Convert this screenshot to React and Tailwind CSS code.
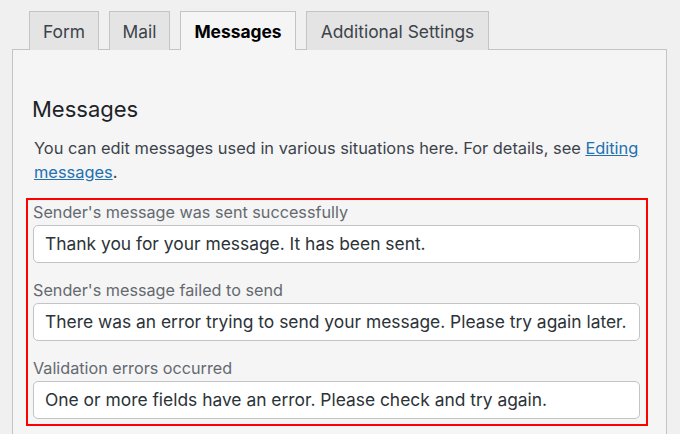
const tabs = [
    { name: "Form", width: "w-[70px]", active: false },
    { name: "Mail", width: "w-[61px]", active: false },
    { name: "Messages", width: "w-[116px]", active: true },
    { name: "Additional Settings", width: "w-[183px]", active: false },
];

const messages = [
    { label: "Sender's message was sent successfully", value: "Thank you for your message. It has been sent." },
    { label: "Sender's message failed to send", value: "There was an error trying to send your message. Please try again later." },
    { label: "Validation errors occurred", value: "One or more fields have an error. Please check and try again." },
];

const App = () => {
    return (
        <div className="w-[680px] h-[434px] overflow-hidden bg-[#f0f0f1] text-[#1d2327]" style={{ fontFamily: "Inter, 'Noto Sans', sans-serif" }}>
            {/* Tabs */}
            <div className="flex items-end gap-[10px] pl-[29px] h-[50px]">
                {tabs.map(tab => (
                    <div
                        key={tab.name}
                        className={`${tab.width} h-[39px] pt-[3px] flex items-center justify-center whitespace-nowrap border border-[#c3c4c7] text-[17.4px] ${tab.active ? 'bg-[#f5f5f5] border-b-0 relative z-10 font-bold text-black' : 'bg-[#e4e4e4] border-b-0 text-[#3c434a]'}`}
                    >
                        {tab.name}
                    </div>
                ))}
            </div>

            {/* Panel */}
            <div className="-mt-px ml-[12px] w-[655px] h-[400px] bg-[#f5f5f5] border border-[#c3c4c7] pt-[44px] pl-[19px] pr-[18px]">
                <h2 className="text-[22px] leading-[30px] text-[#1d2327]">Messages</h2>
                <div className="mt-[12px] ml-[2px] text-[16.4px] leading-[24px] text-[#3c434a] whitespace-nowrap">
                    <p>
                        You can edit messages used in various situations here. For details, see{" "}
                        <a href="#" className="text-[#2271b1] underline">Editing</a>
                    </p>
                    <p>
                        <a href="#" className="text-[#2271b1] underline">messages</a>.
                    </p>
                </div>

                <div className="mt-[14px] -ml-[6px] w-[622px] border-2 border-[#ff0000] pl-[5px] pr-[6px] pt-px pb-[5px]">
                    {messages.map((m, i) => (
                        <div key={i} className={i > 0 ? "mt-[16px]" : ""}>
                            <label className="block text-[16.2px] leading-[22px] text-[#646970]">{m.label}</label>
                            <div className="mt-[2px] h-[38px] flex items-center bg-white border border-[#c3c4c7] rounded-[5px] pl-[11px] text-[17.4px] text-[#2c3338] whitespace-nowrap">
                                {m.value}
                            </div>
                        </div>
                    ))}
                </div>
            </div>
        </div>
    );
};

export default App;
